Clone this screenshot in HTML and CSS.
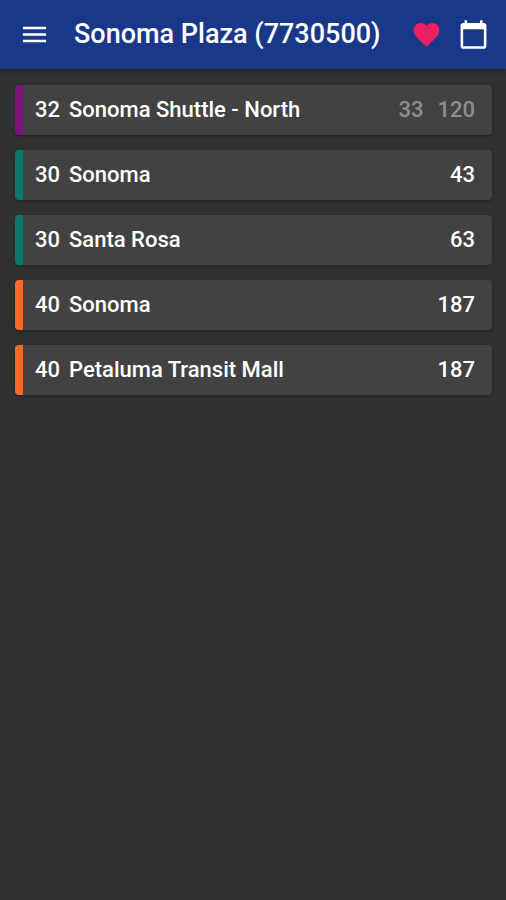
FILE: index.html
```html
<!DOCTYPE html>
<html lang="en">
<head>
<meta charset="utf-8">
<meta name="viewport" content="width=device-width, initial-scale=1">
<title>Sonoma Plaza (7730500)</title>
<link rel="stylesheet" href="styles.css">
</head>
<body>
<header class="bar">
  <button class="icon-button" type="button" aria-label="Menu">
    <svg class="icon" viewBox="0 0 24 24"><path d="M3 18h18v-2H3v2zm0-5h18v-2H3v2zm0-7v2h18V6H3z"/></svg>
  </button>
  <h1 class="title">Sonoma Plaza (7730500)</h1>
  <div class="actions">
    <button class="icon-button favorite" type="button" aria-label="Favorite">
      <svg class="icon" viewBox="0 0 24 24"><path d="M12 21.35l-1.45-1.32C5.4 15.36 2 12.28 2 8.5 2 5.42 4.42 3 7.5 3c1.74 0 3.41.81 4.5 2.09C13.09 3.81 14.76 3 16.5 3 19.58 3 22 5.42 22 8.5c0 3.78-3.4 6.86-8.55 11.54L12 21.35z"/></svg>
    </button>
    <button class="icon-button" type="button" aria-label="Schedule">
      <svg class="icon" viewBox="0 0 24 24"><path d="M20 3h-1V1h-2v2H7V1H5v2H4c-1.100 0-2 .9-2 2v16c0 1.100.9 2 2 2h16c1.100 0 2-.9 2-2V5c0-1.100-.9-2-2-2zm0 18H4V8h16v13z"/></svg>
    </button>
  </div>
</header>
<main>
  <ul class="routes">
    <li class="route purple"><span class="number">32</span><span class="name">Sonoma Shuttle - North</span><span class="times muted"><span>33</span><span>120</span></span></li>
    <li class="route green"><span class="number">30</span><span class="name">Sonoma</span><span class="times"><span>43</span></span></li>
    <li class="route green"><span class="number">30</span><span class="name">Santa Rosa</span><span class="times"><span>63</span></span></li>
    <li class="route orange"><span class="number">40</span><span class="name">Sonoma</span><span class="times"><span>187</span></span></li>
    <li class="route orange"><span class="number">40</span><span class="name">Petaluma Transit Mall</span><span class="times"><span>187</span></span></li>
  </ul>
</main>
</body>
</html>
```
FILE: styles.css
```css
* {
  box-sizing: border-box;
}

body {
  margin: 0;
  min-height: 100vh;
  background: #303030;
  color: #fff;
  font-family: Roboto, "Liberation Sans", sans-serif;
  font-weight: 500;
}

.bar {
  display: flex;
  align-items: center;
  padding: 19px 17px 19px 19px;
  background: #1a388a;
  box-shadow: 0 2px 6px rgba(0, 0, 0, 0.3);
}

.icon-button {
  display: block;
  padding: 0;
  border: 0;
  background: none;
  color: #fff;
}

.favorite {
  color: #ec1f63;
}

.icon {
  display: block;
  width: 31px;
  height: 31px;
  fill: currentColor;
}

.title {
  flex: 1;
  margin: 0 0 0 24px;
  font-size: 27px;
  line-height: 31px;
  font-weight: 500;
  white-space: nowrap;
}

.actions {
  display: flex;
  gap: 16px;
}

.routes {
  display: flex;
  flex-direction: column;
  gap: 15px;
  margin: 0;
  padding: 16px 14px 15px 15px;
  list-style: none;
}

.route {
  display: flex;
  align-items: center;
  padding: 10px 17px 10px 12px;
  border-left: 8px solid;
  border-radius: 4px;
  background: #424242;
  box-shadow: 0 1px 3px rgba(0, 0, 0, 0.3);
  font-size: 22px;
  line-height: 30px;
}

.purple {
  border-color: #7b1478;
}

.green {
  border-color: #067a68;
}

.orange {
  border-color: #f66a23;
}

.number,
.name,
.times {
  color: #fff;
}

.number {
  margin-right: 9px;
}

.name {
  flex: 1;
}

.times {
  display: flex;
  gap: 14px;
}

.times.muted {
  color: #8e8e8e;
}
```
